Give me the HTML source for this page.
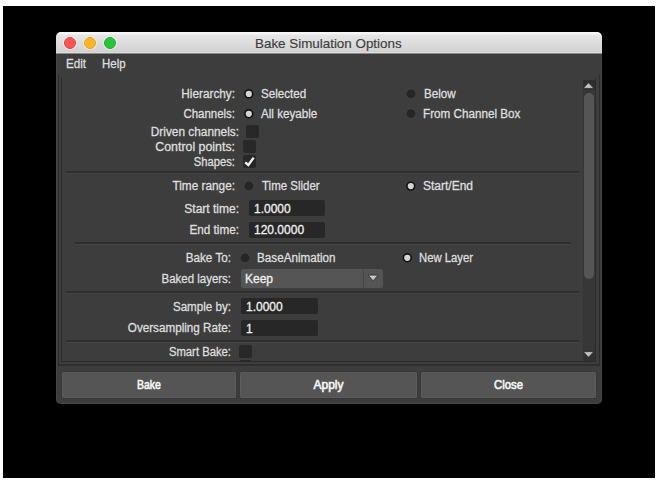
<!DOCTYPE html>
<html><head><meta charset="utf-8">
<style>
html,body{margin:0;padding:0;background:#fff;width:658px;height:484px;overflow:hidden;position:relative;font-family:"Liberation Sans",sans-serif;}
.a{position:absolute;}
#bg{left:3px;top:6px;width:652px;height:472px;background:#000;}
#win{left:56px;top:32px;width:546px;height:372px;background:#3d3d3d;border-radius:5px;overflow:hidden;}
#title{left:0;top:0;width:546px;height:22px;background:linear-gradient(#f8f8f8 0px,#f4f4f4 2px,#e6e6e6 3px,#d2d2d2 20px,#dcdcdc 20px,#dcdcdc 21px,#8a8a8a 21px,#8a8a8a 22px);}
.tl{width:12px;height:12px;border-radius:50%;box-sizing:border-box;box-shadow:0 0 0 1px rgba(248,252,252,0.55);}
.t{white-space:nowrap;font-size:12px;line-height:14px;color:#dedede;-webkit-text-stroke:0.3px currentColor;}
.r{text-align:right;}
.lab{right:0;}
.fld{background:#272727;border-radius:2px;}
.cb{background:#282828;border-radius:2px;}
.rad{width:9px;height:9px;border-radius:50%;box-sizing:border-box;}
.on{background:#d2d2d2;border:1.6px solid #151515;}
.off{background:#262626;}
.sep{height:2px;background:#2e2e2e;box-shadow:0 1px 0 #454545;}
.btn{background:#555;border-radius:2px;top:372px;height:26px;box-shadow:inset 0 0 0 1px #5b5b5b,0 0 0 1px #393939;}
</style></head><body>
<div id="bg" class="a"></div>
<div id="win" class="a">
  <div id="title" class="a"></div>
</div>
<!-- traffic lights -->
<div class="a tl" style="left:64px;top:37px;background:#fd5454;border:1px solid #e94040;"></div>
<div class="a tl" style="left:84px;top:37px;background:#fdb62a;border:1px solid #e6a01d;"></div>
<div class="a tl" style="left:104px;top:37px;background:#2ac33e;border:1px solid #1fae30;"></div>
<div class="a t" style="left:255px;top:36px;font-size:13.4px;line-height:16px;color:#3c3c3c;-webkit-text-stroke:0.15px #3c3c3c;">Bake Simulation Options</div>

<div class="a" style="left:56px;top:54px;width:546px;height:350px;box-sizing:border-box;border:1px solid #464646;border-top:0;border-radius:0 0 5px 5px;"></div>
<!-- menu -->
<div class="a t" style="left:66px;top:57px;transform:scaleX(0.97);transform-origin:left;">Edit</div>
<div class="a t" style="left:102px;top:57px;transform:scaleX(0.955);transform-origin:left;">Help</div>

<!-- frames -->
<div class="a" style="left:58px;top:75px;width:540px;height:289px;border-left:1px solid #2b2b2b;border-right:1px solid #2b2b2b;border-bottom:2px solid #2f2f2f;"></div>
<div class="a" style="left:61px;top:78px;width:533px;height:283px;border-left:1px solid #2b2b2b;border-right:1px solid #2b2b2b;border-bottom:1px solid #2a2a2a;"></div>

<!-- scrollbar -->
<div class="a" style="left:583px;top:80px;width:12px;height:281px;background:#373737;"></div>
<div class="a" style="left:583px;top:80px;width:12px;height:10px;background:#2f2f2f;"></div>
<div class="a" style="left:583px;top:350px;width:12px;height:11px;background:#323232;"></div>
<div class="a" style="left:584px;top:93px;width:10px;height:186px;background:#555;border-radius:5px;"></div>
<svg class="a" style="left:583px;top:82px;" width="11" height="7"><polygon points="0.4,6.3 5.5,0.8 10.6,6.3" fill="#c4c4c4" stroke="#262626" stroke-width="0.6" stroke-linejoin="round"/></svg>
<svg class="a" style="left:583px;top:351px;" width="11" height="7"><polygon points="0.4,0.7 5.5,6.2 10.6,0.7" fill="#c4c4c4" stroke="#262626" stroke-width="0.6" stroke-linejoin="round"/></svg>

<!-- separators -->
<div class="a sep" style="left:66px;top:171px;width:513px;"></div>
<div class="a sep" style="left:75px;top:242px;width:496px;"></div>
<div class="a sep" style="left:66px;top:291px;width:513px;"></div>
<div class="a sep" style="left:66px;top:340px;width:513px;"></div>

<!-- labels (right edge) -->
<div class="a t r" style="left:0;width:235px;top:87px;transform:scaleX(0.981);transform-origin:right;">Hierarchy:</div>
<div class="a t r" style="left:0;width:235px;top:107px;transform:scaleX(0.955);transform-origin:right;">Channels:</div>
<div class="a t r" style="left:0;width:239px;top:125px;transform:scaleX(0.987);transform-origin:right;">Driven channels:</div>
<div class="a t r" style="left:0;width:235px;top:140px;transform:scaleX(1.03);transform-origin:right;">Control points:</div>
<div class="a t r" style="left:0;width:235px;top:155px;transform:scaleX(0.935);transform-origin:right;">Shapes:</div>
<div class="a t r" style="left:0;width:235px;top:179px;transform:scaleX(0.984);transform-origin:right;">Time range:</div>
<div class="a t r" style="left:0;width:239px;top:202px;">Start time:</div>
<div class="a t r" style="left:0;width:239px;top:223px;transform:scaleX(0.978);transform-origin:right;">End time:</div>
<div class="a t r" style="left:0;width:231px;top:251px;transform:scaleX(0.974);transform-origin:right;">Bake To:</div>
<div class="a t r" style="left:0;width:231px;top:272px;transform:scaleX(0.956);transform-origin:right;">Baked layers:</div>
<div class="a t r" style="left:0;width:231px;top:300px;transform:scaleX(0.968);transform-origin:right;">Sample by:</div>
<div class="a t r" style="left:0;width:231px;top:321px;transform:scaleX(0.973);transform-origin:right;">Oversampling Rate:</div>
<div class="a t r" style="left:0;width:231px;top:345px;transform:scaleX(0.94);transform-origin:right;">Smart Bake:</div>

<!-- radios -->
<svg class="a" style="left:241px;top:86px;" width="14" height="14"><circle cx="7.80" cy="7.90" r="4.7" fill="#121212"/><circle cx="7.80" cy="7.90" r="3.1" fill="#d4d4d4"/></svg>
<svg class="a" style="left:241px;top:106px;" width="14" height="14"><circle cx="7.80" cy="7.80" r="4.7" fill="#121212"/><circle cx="7.80" cy="7.80" r="3.1" fill="#d4d4d4"/></svg>
<svg class="a" style="left:403px;top:179px;" width="14" height="14"><circle cx="7.80" cy="7.10" r="4.7" fill="#121212"/><circle cx="7.80" cy="7.10" r="3.1" fill="#d4d4d4"/></svg>
<svg class="a" style="left:400px;top:250px;" width="14" height="14"><circle cx="7.30" cy="7.80" r="4.7" fill="#121212"/><circle cx="7.30" cy="7.80" r="3.1" fill="#d4d4d4"/></svg>
<svg class="a" style="left:404px;top:86px;" width="14" height="14"><circle cx="7.00" cy="7.80" r="5.2" fill="none" stroke="#444" stroke-width="0.8"/><circle cx="7.00" cy="7.80" r="4.4" fill="#262626"/></svg>
<svg class="a" style="left:404px;top:106px;" width="14" height="14"><circle cx="7.00" cy="7.60" r="5.2" fill="none" stroke="#444" stroke-width="0.8"/><circle cx="7.00" cy="7.60" r="4.4" fill="#262626"/></svg>
<svg class="a" style="left:241px;top:178px;" width="14" height="14"><circle cx="7.90" cy="7.90" r="5.2" fill="none" stroke="#444" stroke-width="0.8"/><circle cx="7.90" cy="7.90" r="4.4" fill="#262626"/></svg>
<svg class="a" style="left:238px;top:250px;" width="14" height="14"><circle cx="7.00" cy="7.90" r="5.2" fill="none" stroke="#444" stroke-width="0.8"/><circle cx="7.00" cy="7.90" r="4.4" fill="#262626"/></svg>

<div class="a t" style="left:261px;top:87px;transform:scaleX(0.97);transform-origin:left;">Selected</div>
<div class="a t" style="left:261px;top:107px;transform:scaleX(0.97);transform-origin:left;">All keyable</div>
<div class="a t" style="left:424px;top:87px;transform:scaleX(0.97);transform-origin:left;">Below</div>
<div class="a t" style="left:423px;top:107px;transform:scaleX(0.973);transform-origin:left;">From Channel Box</div>
<div class="a t" style="left:262px;top:179px;transform:scaleX(0.956);transform-origin:left;">Time Slider</div>
<div class="a t" style="left:423px;top:179px;">Start/End</div>
<div class="a t" style="left:257px;top:251px;transform:scaleX(0.974);transform-origin:left;">BaseAnimation</div>
<div class="a t" style="left:419px;top:251px;transform:scaleX(0.94);transform-origin:left;">New Layer</div>

<!-- checkboxes -->
<div class="a cb" style="left:246px;top:125px;width:13px;height:13px;"></div>
<div class="a cb" style="left:243px;top:140px;width:13px;height:13px;"></div>
<div class="a cb" style="left:243px;top:155px;width:13px;height:13px;"></div>
<svg class="a" style="left:243px;top:155px;" width="13" height="13"><polyline points="2.2,7.3 5.3,10 10.7,2.6" fill="none" stroke="#f2f2f2" stroke-width="2.4"/></svg>
<div class="a cb" style="left:239px;top:345px;width:13px;height:13px;"></div>
<div class="a cb" style="left:240px;top:360px;width:11px;height:2px;"></div>

<!-- fields -->
<div class="a fld" style="left:249px;top:200px;width:76px;height:16px;"></div>
<div class="a fld" style="left:249px;top:222px;width:76px;height:16px;"></div>
<div class="a fld" style="left:241px;top:298px;width:77px;height:16px;"></div>
<div class="a fld" style="left:241px;top:320px;width:77px;height:16px;"></div>
<div class="a t" style="left:254px;top:202px;color:#f0f0f0;">1.0000</div>
<div class="a t" style="left:254px;top:223px;color:#f0f0f0;">120.0000</div>
<div class="a t" style="left:246px;top:300px;color:#f0f0f0;">1.0000</div>
<div class="a t" style="left:246px;top:322px;color:#f0f0f0;">1</div>

<!-- dropdown -->
<div class="a" style="left:241px;top:269px;width:142px;height:19px;background:#555;border-radius:2px;"></div>
<div class="a" style="left:363px;top:269px;width:1px;height:19px;background:#474747;"></div>
<svg class="a" style="left:367px;top:274px;" width="13" height="9"><polygon points="1.2,1.1 11,1.1 6.1,6.9" fill="#c9c9c9" stroke="#303030" stroke-width="0.9" stroke-linejoin="round"/></svg>
<div class="a t" style="left:245px;top:272px;color:#f0f0f0;">Keep</div>

<!-- buttons -->
<div class="a btn" style="left:62px;width:174px;"></div>
<div class="a btn" style="left:240px;width:177px;"></div>
<div class="a btn" style="left:421px;width:175px;"></div>
<div class="a t" style="left:62px;width:174px;top:378px;text-align:center;color:#f4f4f4;-webkit-text-stroke:0.6px #f4f4f4;transform:scaleX(0.875);transform-origin:center;">Bake</div>
<div class="a t" style="left:240px;width:177px;top:378px;text-align:center;color:#f4f4f4;-webkit-text-stroke:0.6px #f4f4f4;">Apply</div>
<div class="a t" style="left:421px;width:175px;top:378px;text-align:center;color:#f4f4f4;-webkit-text-stroke:0.6px #f4f4f4;transform:scaleX(0.94);transform-origin:center;">Close</div>
</body></html>
